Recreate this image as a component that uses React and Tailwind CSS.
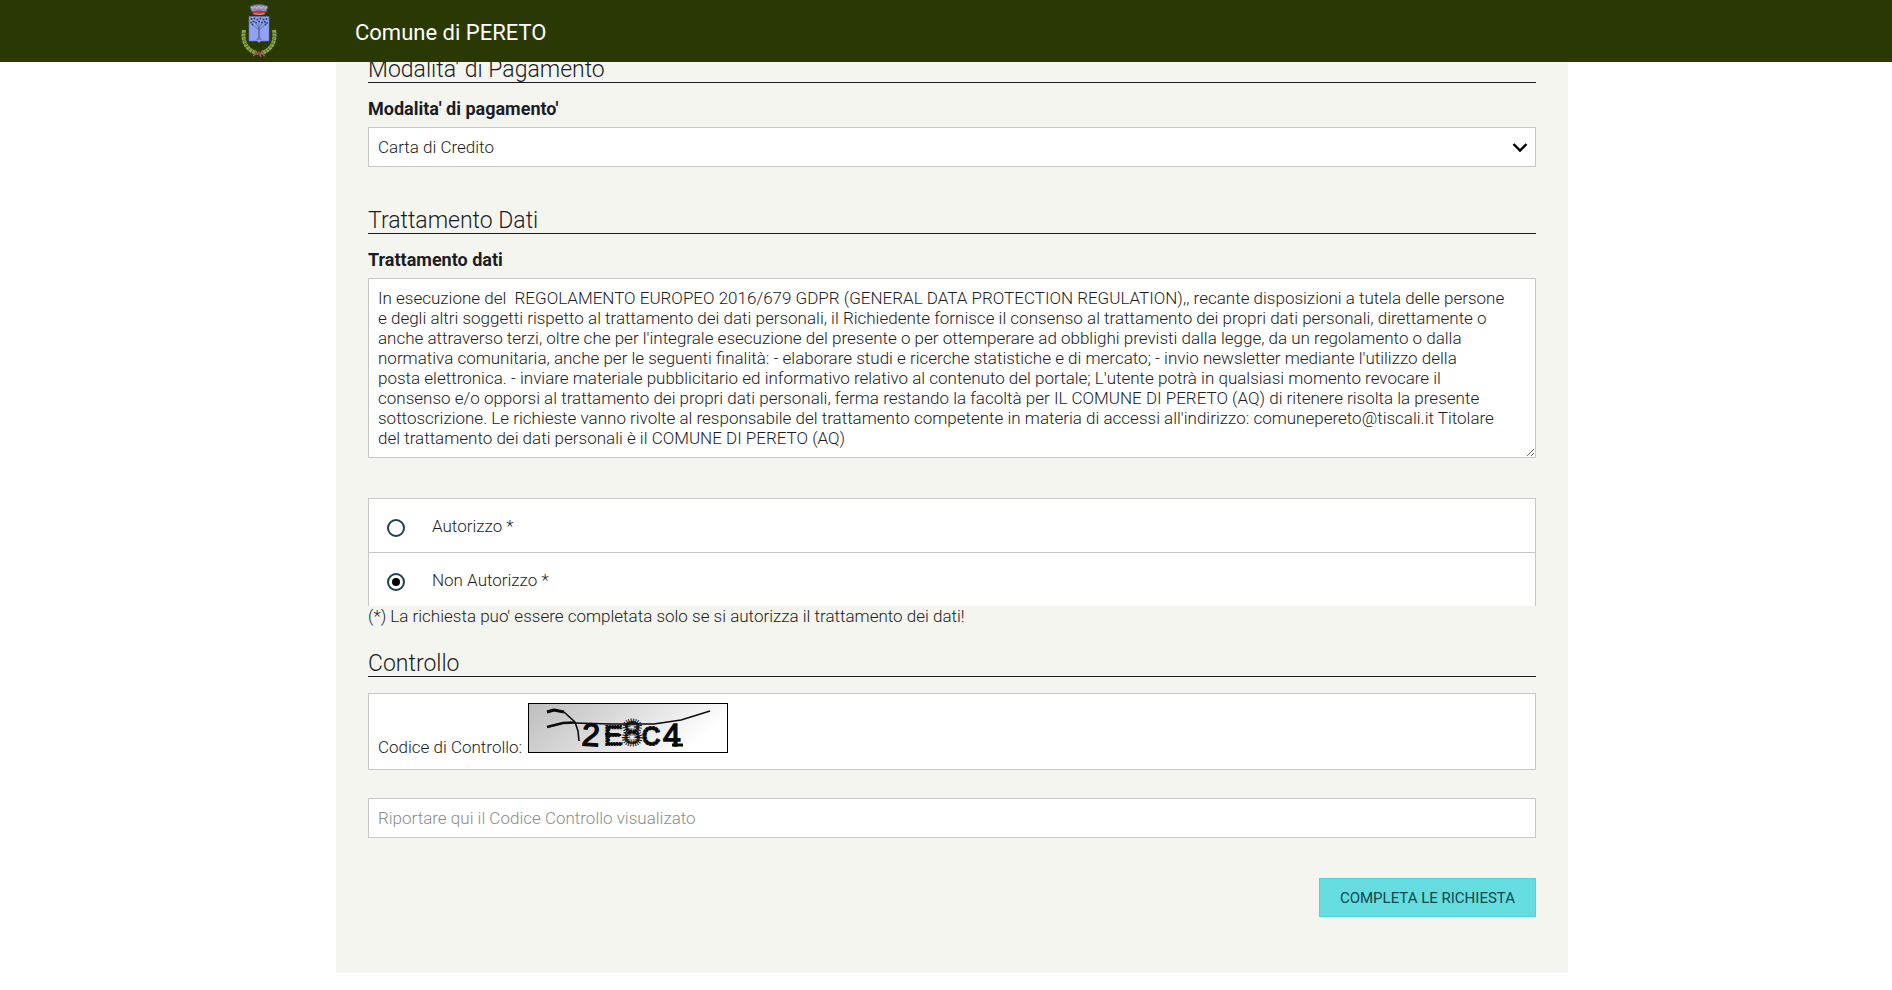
import { useState } from "react";
import clsx from "clsx";

const PRIVACY_TEXT = [
  "In esecuzione del  REGOLAMENTO EUROPEO 2016/679 GDPR (GENERAL DATA PROTECTION REGULATION),, recante disposizioni a tutela delle persone",
  "e degli altri soggetti rispetto al trattamento dei dati personali, il Richiedente fornisce il consenso al trattamento dei propri dati personali, direttamente o",
  "anche attraverso terzi, oltre che per l'integrale esecuzione del presente o per ottemperare ad obblighi previsti dalla legge, da un regolamento o dalla",
  "normativa comunitaria, anche per le seguenti finalità: - elaborare studi e ricerche statistiche e di mercato; - invio newsletter mediante l'utilizzo della",
  "posta elettronica. - inviare materiale pubblicitario ed informativo relativo al contenuto del portale; L'utente potrà in qualsiasi momento revocare il",
  "consenso e/o opporsi al trattamento dei propri dati personali, ferma restando la facoltà per IL COMUNE DI PERETO (AQ) di ritenere risolta la presente",
  "sottoscrizione. Le richieste vanno rivolte al responsabile del trattamento competente in materia di accessi all'indirizzo: comunepereto@tiscali.it Titolare",
  "del trattamento dei dati personali è il COMUNE DI PERETO (AQ)",
].join("\n");

function Stemma() {
  return (
    <svg viewBox="0 0 36 54" className="h-[54px] w-9 shrink-0" aria-hidden="true">
      {/* corona */}
      <path d="M9 2.500 Q18 -1.500 27 2.500 L25 8 Q18 5.500 11 8 Z" fill="#8d8fb8" stroke="#66668c" strokeWidth="0.800" />
      <path d="M10 3 l2 1.500 2-2 2 2 2-2.500 2 2.500 2-2 2 2 2-1.500" fill="none" stroke="#c9cbe6" strokeWidth="0.900" />
      <path d="M11 7.500 Q18 6 25 7.500 L24 9.500 Q18 10.500 12 9.500 Z" fill="#e02a2a" />
      <path d="M12.500 9.800 Q18 11 23.500 9.800" fill="none" stroke="#d8c8dc" strokeWidth="0.900" />
      {/* scudo con albero */}
      <path d="M8 12.500 H28 V37 H20 L18 38.500 L16 37 H8 Z" fill="#8ea2f6" stroke="#6474c4" strokeWidth="0.600" />
      <path d="M17.200 23 h1.600 l0.400 11 2.300 1.800 h-7 l2.300-1.800 z" fill="#6d74ac" />
      <path d="M18 26 L11 20 M18 24 L14 18 M18 26 L25 20 M18 24 L22 18 M18 25 V17" fill="none" stroke="#6068a0" strokeWidth="0.800" />
      <g fill="#35455c">
        <circle cx="10.500" cy="15" r="1.100" />
        <circle cx="13.500" cy="14.500" r="1" />
        <circle cx="16.500" cy="15.500" r="1.100" />
        <circle cx="19.500" cy="14.500" r="1" />
        <circle cx="22.500" cy="15.500" r="1.100" />
        <circle cx="25.500" cy="15" r="1" />
        <circle cx="10" cy="18.500" r="1" />
        <circle cx="12.500" cy="17.500" r="1.100" />
        <circle cx="15" cy="18.500" r="0.900" />
        <circle cx="18" cy="17.500" r="0.900" />
        <circle cx="21" cy="18.500" r="1" />
        <circle cx="23.800" cy="17.800" r="1.100" />
        <circle cx="26" cy="19" r="0.900" />
        <circle cx="11.500" cy="20.500" r="0.900" />
        <circle cx="24.500" cy="20.500" r="0.900" />
      </g>
      {/* fronde */}
      <path d="M3 26 Q0 43 15 49" fill="none" stroke="#8cab45" strokeWidth="4" strokeDasharray="3 0.500" />
      <path d="M33 26 Q36 43 21 49" fill="none" stroke="#8cab45" strokeWidth="4" strokeDasharray="3 0.500" />
      <path d="M3 28 Q1 42 15 48.500" fill="none" stroke="#5d7040" strokeWidth="1.200" strokeDasharray="1.500 1.500" />
      <path d="M33 28 Q35 42 21 48.500" fill="none" stroke="#5d7040" strokeWidth="1.200" strokeDasharray="1.500 1.500" />
      <path d="M14 46 l3 5 M22 46 l-3 5 M12 52 l4-3 M24 52 l-4-3 M18 49 l2 4" stroke="#a8605c" strokeWidth="1.300" />
      <circle cx="18" cy="48.500" r="1.500" fill="#9c4444" />
    </svg>
  );
}

function Captcha() {
  return (
    <svg viewBox="0 0 198 48" className="h-12 w-[198px]" role="img" aria-label="Codice di controllo">
      <defs>
        <linearGradient id="sfondo" x1="0" y1="0" x2="1" y2="0.300">
          <stop offset="0" stopColor="#bebebe" />
          <stop offset="0.500" stopColor="#dcdcdc" />
          <stop offset="1" stopColor="#ffffff" />
        </linearGradient>
      </defs>
      <rect width="198" height="48" fill="url(#sfondo)" />
      <g fontFamily="Liberation Sans, sans-serif" fontSize="32" fill="#0a0a0a" stroke="#0a0a0a" strokeWidth="1.400">
        <text x="53" y="42" transform="rotate(4 62 32)">2</text>
        <text x="75" y="41" fontSize="28" strokeWidth="2" strokeDasharray="2 0.700">E</text>
        <text x="94" y="40" fontSize="33" strokeWidth="5" strokeDasharray="0.800 1.200" fill="#444">8</text>
        <text x="113" y="41" fontSize="25" strokeWidth="2" strokeDasharray="3 0.500">C</text>
        <text x="134" y="42">4</text>
      </g>
      <path d="M143 41 h11" stroke="#0a0a0a" strokeWidth="3" />
      <path d="M76 30 h14" stroke="#0a0a0a" strokeWidth="2" />
      <g fill="none" stroke="#0a0a0a" strokeLinejoin="round">
        <path d="M18 8 L25 6 L35 8" strokeWidth="3" />
        <path d="M35 8 L46 18 L49 27 L50 37" strokeWidth="1.600" />
        <path d="M18 23 L34 19 L45 18.500" strokeWidth="2.600" />
        <path d="M45 19 L82 20 H125 L152 16 L181 7" strokeWidth="1.400" />
      </g>
    </svg>
  );
}

function SectionTitle({ children, className }) {
  return (
    <h2 className={clsx("border-b border-[#1c1c24] pt-1 text-[23px] leading-6 font-light", className)}>
      {children}
    </h2>
  );
}

function RadioRow({ label, value, selected, onSelect }) {
  return (
    <label className="flex h-[54px] items-center gap-[27px] border-x border-t border-[#c8c8c8] bg-white pl-[18px]">
      <input
        type="radio"
        name="consenso"
        value={value}
        checked={selected}
        onChange={() => onSelect(value)}
        className="mt-1 grid size-[18px] appearance-none place-items-center rounded-full border-2 border-[#17454a] bg-white before:size-2 before:rounded-full checked:before:bg-black"
      />
      {label}
    </label>
  );
}

export default function App() {
  const [consenso, setConsenso] = useState("no");

  return (
    <div className="min-h-screen bg-white font-['Roboto','Liberation_Sans',sans-serif] text-[17px] leading-5 font-light text-[#1c1c24]">
      <header className="fixed inset-x-0 top-0 z-10 bg-[#2a3904]">
        <div className="mx-auto flex h-[62px] max-w-[1440px] items-center gap-[78px] px-[15px]">
          <Stemma />
          <h1 className="pt-1 text-[22px] leading-7 font-normal text-white">Comune di PERETO</h1>
        </div>
      </header>

      <main className="mx-auto max-w-[1244px] pl-3">
        <form
          className="bg-[#f4f5ef] px-8 pt-[54px] pb-14"
          onSubmit={(e) => e.preventDefault()}
        >
          {/* Pagamento */}
          <SectionTitle>Modalita' di Pagamento</SectionTitle>
          <label htmlFor="pagamento" className="mt-4 mb-2 block text-lg leading-5 font-bold">
            Modalita' di pagamento'
          </label>
          <div className="relative">
            <select
              id="pagamento"
              className="block h-10 w-full appearance-none border border-[#c8c8c8] bg-white px-[9px]"
            >
              <option>Carta di Credito</option>
            </select>
            <svg
              viewBox="0 0 16 10"
              className="pointer-events-none absolute top-4 right-2 h-[10px] w-4"
              aria-hidden="true"
            >
              <path d="M1.500 1 L8 7.500 L14.500 1" fill="none" stroke="#000" strokeWidth="2.400" />
            </svg>
          </div>

          {/* Trattamento dati */}
          <SectionTitle className="mt-[38px]">Trattamento Dati</SectionTitle>
          <label htmlFor="trattamento" className="mt-4 mb-2 block text-lg leading-5 font-bold">
            Trattamento dati
          </label>
          <textarea
            id="trattamento"
            rows={8}
            readOnly
            value={PRIVACY_TEXT}
            className="block w-full resize border border-[#c8c8c8] bg-white px-[9px] py-[9px]"
          />

          <div className="mt-10">
            <RadioRow
              label="Autorizzo *"
              value="si"
              selected={consenso === "si"}
              onSelect={setConsenso}
            />
            <RadioRow
              label="Non Autorizzo *"
              value="no"
              selected={consenso === "no"}
              onSelect={setConsenso}
            />
          </div>
          <p>(*) La richiesta puo' essere completata solo se si autorizza il trattamento dei dati!</p>

          {/* Controllo */}
          <SectionTitle className="mt-[22px]">Controllo</SectionTitle>
          <div className="mt-4 flex h-[77px] items-baseline gap-[6px] border border-[#c8c8c8] bg-white px-[9px] pt-[9px]">
            <label htmlFor="codice">Codice di Controllo:</label>
            <div className="border border-black">
              <Captcha />
            </div>
          </div>
          <input
            id="codice"
            type="text"
            placeholder="Riportare qui il Codice Controllo visualizato"
            className="mt-7 block h-10 w-full border border-[#c8c8c8] bg-white px-[9px] placeholder:text-[#8c8c8c]"
          />

          <div className="mt-10 flex justify-end">
            <button
              type="submit"
              className="h-[39px] border border-[#4fd6da] bg-[#65dce0] px-5 text-[15px] font-normal text-[#0f484c] uppercase"
            >
              Completa le richiesta
            </button>
          </div>
        </form>
      </main>
    </div>
  );
}
